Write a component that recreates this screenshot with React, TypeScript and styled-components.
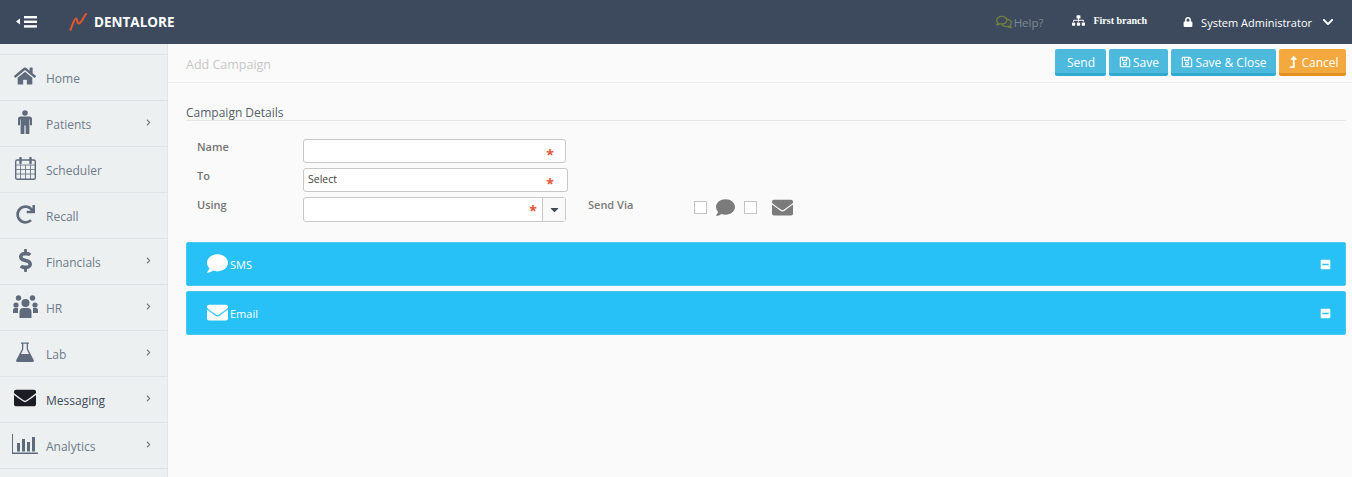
import * as React from 'react';
import styled, { createGlobalStyle } from 'styled-components';
import {
  FaHome,
  FaRedo,
  FaDollarSign,
  FaEnvelope,
  FaComment,
  FaRegSave,
  FaLock,
  FaSitemap,
  FaChevronDown,
  FaChevronRight,
  FaMinusSquare,
  FaLevelUpAlt,
  FaRegComments,
  FaCaretDown,
} from 'react-icons/fa';

const GlobalStyle = createGlobalStyle`
  html, body {
    margin: 0;
    padding: 0;
    height: 100%;
    overflow: hidden;
    background: #fafafa;
    font-family: "Open Sans", "Liberation Sans", sans-serif;
  }
`;

const Page = styled.div`
  width: 1352px;
  height: 477px;
  display: flex;
  flex-direction: column;
  overflow: hidden;
`;

const Header = styled.header`
  height: 44px;
  flex: none;
  background: #3d4a5d;
  display: flex;
  align-items: center;
  color: #fff;
`;

const Toggle = styled.div`
  width: 69px;
  padding-left: 16px;
  box-sizing: border-box;
  display: flex;
  align-items: center;
`;

const Logo = styled.div`
  display: flex;
  align-items: center;
  gap: 7px;
  font-size: 13.5px;
  font-weight: 700;
`;

const HeaderRight = styled.div`
  margin-left: auto;
  display: flex;
  align-items: center;
`;

const Help = styled.span`
  display: flex;
  align-items: center;
  gap: 2px;
  font-size: 11.5px;
  color: #7e8794;
  margin-right: 29px;

  svg {
    color: #6f7f3d;
    font-size: 16px;
  }
`;

const Branch = styled.span`
  display: flex;
  align-items: center;
  gap: 8px;
  font-family: "Liberation Serif", serif;
  font-size: 10px;
  font-weight: 700;
  margin-right: 36px;
  position: relative;
  top: -2px;

  svg {
    font-size: 13px;
  }
`;

const User = styled.span`
  display: flex;
  align-items: center;
  font-size: 11px;
  margin-right: 18px;

  svg:first-child {
    font-size: 10px;
    margin-right: 8px;
  }

  svg:last-child {
    font-size: 12px;
    margin-left: 10px;
  }
`;

const Body = styled.div`
  flex: 1;
  display: flex;
  min-height: 0;
`;

const Sidebar = styled.nav`
  width: 168px;
  flex: none;
  box-sizing: border-box;
  background: #ecf0f1;
  border-right: 1px solid #e2e6e8;
  padding-top: 10px;
  display: flex;
  flex-direction: column;
`;

const NavItem = styled.div<{ $active?: boolean }>`
  height: 46px;
  flex: none;
  box-sizing: border-box;
  border-top: 1px solid #e0e4e6;
  display: flex;
  align-items: center;
  position: relative;
  padding-left: 46px;
  padding-top: 1px;
  font-size: 12px;
  color: ${(p) => (p.$active ? '#3d4a5d' : '#6f7b8a')};
`;

const NavIcon = styled.span<{ $active?: boolean }>`
  position: absolute;
  left: 11px;
  top: 8px;
  width: 28px;
  height: 26px;
  display: flex;
  align-items: center;
  justify-content: center;
  color: ${(p) => (p.$active ? '#1c1c24' : '#5f6b7c')};
`;

const NavArrow = styled(FaChevronRight)`
  position: absolute;
  right: 15px;
  top: 18px;
  font-size: 7px;
  color: #6f7b8a;
`;

const Main = styled.main`
  flex: 1;
  min-width: 0;
  background: #fafafa;
`;

const TopBar = styled.div`
  height: 39px;
  box-sizing: border-box;
  border-bottom: 1px solid #eeeeee;
  display: flex;
  align-items: flex-start;
  padding: 5px 6px 0 18px;
`;

const Title = styled.h1`
  margin: 0;
  padding-top: 7px;
  font-size: 12.5px;
  line-height: 18px;
  font-weight: 400;
  color: #c8c8c8;
`;

const Actions = styled.div`
  margin-left: auto;
  display: flex;
  gap: 3px;
`;

const Button = styled.button<{ $width: number; $warn?: boolean }>`
  width: ${(p) => p.$width}px;
  height: 27px;
  box-sizing: border-box;
  border: 0;
  border-bottom: 3px solid ${(p) => (p.$warn ? '#e2901f' : '#32a9d0')};
  border-radius: 2px;
  background: ${(p) => (p.$warn ? '#f4a93f' : '#4db9dc')};
  color: #fff;
  padding: 2px 0 0 1px;
  font-family: inherit;
  font-size: 12px;
  display: flex;
  align-items: center;
  justify-content: center;
  gap: 2px;

  svg {
    font-size: 12px;
  }
`;

const Content = styled.div`
  padding: 23px 6px 0 18px;
`;

const SectionTitle = styled.div`
  font-size: 12px;
  line-height: 14px;
  color: #555f6b;
  border-bottom: 1px solid #e5e5e5;
`;

const Form = styled.div`
  padding: 18px 0 0 11px;
  display: flex;
  flex-direction: column;
  gap: 5px;
  height: 121px;
  box-sizing: border-box;
`;

const Row = styled.div`
  display: flex;
  align-items: flex-start;
`;

const Label = styled.label`
  width: 106px;
  flex: none;
  font-size: 11px;
  font-weight: 600;
  line-height: 15px;
  color: #757575;
`;

const Field = styled.div<{ $width: number; $height?: number }>`
  width: ${(p) => p.$width}px;
  height: ${(p) => p.$height ?? 24}px;
  box-sizing: border-box;
  border: 1px solid #c8c8c8;
  border-radius: 3px;
  background: #fff;
  position: relative;
  display: flex;
  align-items: center;
  padding: 0 0 3px 4px;
  font-size: 10.5px;
  color: #444;
`;

const Star = styled.span<{ $right: number; $top?: number }>`
  position: absolute;
  right: ${(p) => p.$right}px;
  top: ${(p) => p.$top ?? 7}px;
  color: #e4553a;
  font-size: 14px;
  line-height: 16px;
  font-weight: 700;
`;

const DropButton = styled.span`
  position: absolute;
  right: 0;
  top: 0;
  bottom: 0;
  width: 22px;
  border-left: 1px solid #c8c8c8;
  display: flex;
  align-items: center;
  justify-content: center;
  color: #444c58;
  font-size: 13px;
  background: #f9f9f9;
`;

const SendVia = styled.div`
  margin-left: 22px;
  display: flex;
  align-items: center;
  height: 20px;
  font-size: 11px;
  font-weight: 600;
  color: #7a7a7a;
`;

const SendLabel = styled.span`
  width: 106px;
  position: relative;
  top: -3px;
`;

const Check = styled.span<{ $gap: number }>`
  width: 13px;
  height: 13px;
  box-sizing: border-box;
  border: 1px solid #c4c4c4;
  background: #fff;
  margin-right: ${(p) => p.$gap}px;
`;

const ViaComment = styled(FaComment)`
  width: 21px;
  height: 19px;
  color: #7b7b7b;
  margin-right: 8px;
`;

const ViaMail = styled(FaEnvelope)`
  width: 21px;
  height: 21px;
  color: #7b7b7b;
`;

const Panels = styled.div`
  display: flex;
  flex-direction: column;
  gap: 5px;
`;

const Panel = styled.div`
  height: 44px;
  box-sizing: border-box;
  background: #27c0f7;
  border: 1px solid #4dc6ee;
  border-radius: 2px;
  display: flex;
  align-items: center;
  padding: 0 14px 0 20px;
  color: #fff;
  font-size: 11px;
`;

const PanelIcon = styled.span`
  width: 23px;
  display: flex;
  position: relative;
  top: -1px;
  font-size: 21px;
`;

const PanelLabel = styled.span``;

const Collapse = styled(FaMinusSquare)`
  margin-left: auto;
  font-size: 11px;
`;

const MenuIcon = () => (
  <svg width="21" height="12" viewBox="0 0 21 12" fill="#fff">
    <path d="M4 2.5v6L0 5.5z" />
    <rect x="8" y="0" width="13" height="2.4" />
    <rect x="8" y="4.6" width="13" height="2.4" />
    <rect x="8" y="9.2" width="13" height="2.4" />
  </svg>
);

const LogoMark = () => (
  <svg width="18" height="18" viewBox="0 0 18 18" fill="none">
    <path
      d="M1.5 17 C3 13 5 6 7 5.5 C8.5 5.5 8 11 10 10.5 C13 10 14 4 17 1"
      stroke="#e2572b"
      strokeWidth="2"
      strokeLinecap="round"
    />
  </svg>
);

const PersonIcon = () => (
  <svg width="14" height="24" viewBox="0 0 14 24" fill="currentColor">
    <circle cx="7" cy="3" r="2.8" />
    <path d="M2.5 6.5h9A2.5 2.5 0 0 1 14 9v6.2h-2V9.5h-.6V24H7.6v-8.5h-1.2V24H2.6V9.5H2v5.7H0V9a2.500 2.500 0 0 1 2.500-2.500z" />
  </svg>
);

const CalendarIcon = () => (
  <svg width="21" height="23" viewBox="0 0 21 23" fill="none" stroke="currentColor">
    <rect x="0.7" y="3" width="19.600" height="19.300" rx="1.500" strokeWidth="1.400" />
    <path d="M1 8h19M1 12.500h19M1 17h19M5.500 8v14M10.500 8v14M15.500 8v14" strokeWidth="0.800" />
    <path d="M5.500 1v5M15.500 1v5" strokeWidth="2.400" strokeLinecap="round" />
  </svg>
);

const TeamIcon = () => (
  <svg width="25" height="23" viewBox="0 0 25 23" fill="currentColor">
    <circle cx="5.500" cy="3" r="2.700" />
    <circle cx="19.500" cy="3" r="2.700" />
    <circle cx="3" cy="10" r="2.600" />
    <circle cx="22" cy="10" r="2.600" />
    <circle cx="12.500" cy="8" r="4" />
    <path d="M6.500 23v-6a4 4 0 0 1 4-4h4a4 4 0 0 1 4 4v6z" />
    <path d="M0 18v-3a2 2 0 0 1 2-2h3v5zM25 18v-3a2 2 0 0 0-2-2h-3v5z" />
  </svg>
);

const FlaskIcon = () => (
  <svg width="18" height="20" viewBox="0 0 18 20" fill="currentColor">
    <path d="M5 0.500h8v1.200h-1v5.300l5.700 11c.5 1-.2 2-1.200 2H1.500c-1 0-1.700-1-1.200-2L6 7V1.700H5z M7.300 1.700v5.600L5 12h8l-2.300-4.700V1.700z" fillRule="evenodd" />
  </svg>
);

const ChartIcon = () => (
  <svg width="26" height="20" viewBox="0 0 26 20" fill="currentColor">
    <path d="M0 0h1v18.500h25v1.500H0z" />
    <rect x="5" y="9" width="3" height="8.500" />
    <rect x="10" y="5" width="3" height="12.500" />
    <rect x="15" y="8" width="3" height="9.500" />
    <rect x="20" y="3" width="3" height="14.500" />
  </svg>
);

const menu = [
  { label: 'Home', icon: <FaHome size={22} /> },
  { label: 'Patients', icon: <PersonIcon />, sub: true },
  { label: 'Scheduler', icon: <CalendarIcon /> },
  { label: 'Recall', icon: <FaRedo size={19} /> },
  { label: 'Financials', icon: <FaDollarSign size={23} />, sub: true },
  { label: 'HR', icon: <TeamIcon />, sub: true },
  { label: 'Lab', icon: <FlaskIcon />, sub: true },
  { label: 'Messaging', icon: <FaEnvelope size={22} />, sub: true, active: true },
  { label: 'Analytics', icon: <ChartIcon />, sub: true },
];

export default function App() {
  return (
    <Page>
      <GlobalStyle />
      <Header>
        <Toggle>
          <MenuIcon />
        </Toggle>
        <Logo>
          <LogoMark />
          DENTALORE
        </Logo>
        <HeaderRight>
          <Help>
            <FaRegComments />
            Help?
          </Help>
          <Branch>
            <FaSitemap />
            First branch
          </Branch>
          <User>
            <FaLock />
            System Administrator
            <FaChevronDown />
          </User>
        </HeaderRight>
      </Header>
      <Body>
        <Sidebar>
          {menu.map((item) => (
            <NavItem key={item.label} $active={item.active}>
              <NavIcon $active={item.active}>{item.icon}</NavIcon>
              {item.label}
              {item.sub && <NavArrow />}
            </NavItem>
          ))}
          <NavItem />
        </Sidebar>
        <Main>
          <TopBar>
            <Title>Add Campaign</Title>
            <Actions>
              <Button $width={51}>Send</Button>
              <Button $width={59}>
                <FaRegSave />
                Save
              </Button>
              <Button $width={105}>
                <FaRegSave />
                Save &amp; Close
              </Button>
              <Button $width={67} $warn>
                <FaLevelUpAlt />
                Cancel
              </Button>
            </Actions>
          </TopBar>
          <Content>
            <SectionTitle>Campaign Details</SectionTitle>
            <Form>
              <Row>
                <Label>Name</Label>
                <Field $width={263}>
                  <Star $right={11}>*</Star>
                </Field>
              </Row>
              <Row>
                <Label>To</Label>
                <Field $width={265}>
                  Select
                  <Star $right={13}>*</Star>
                </Field>
              </Row>
              <Row>
                <Label>Using</Label>
                <Field $width={263} $height={25}>
                  <Star $right={28} $top={5}>*</Star>
                  <DropButton>
                    <FaCaretDown />
                  </DropButton>
                </Field>
                <SendVia>
                  <SendLabel>Send Via</SendLabel>
                  <Check $gap={8} />
                  <ViaComment />
                  <Check $gap={15} />
                  <ViaMail />
                </SendVia>
              </Row>
            </Form>
            <Panels>
              <Panel>
                <PanelIcon>
                  <FaComment />
                </PanelIcon>
                <PanelLabel>SMS</PanelLabel>
                <Collapse />
              </Panel>
              <Panel>
                <PanelIcon>
                  <FaEnvelope />
                </PanelIcon>
                <PanelLabel>Email</PanelLabel>
                <Collapse />
              </Panel>
            </Panels>
          </Content>
        </Main>
      </Body>
    </Page>
  );
}
